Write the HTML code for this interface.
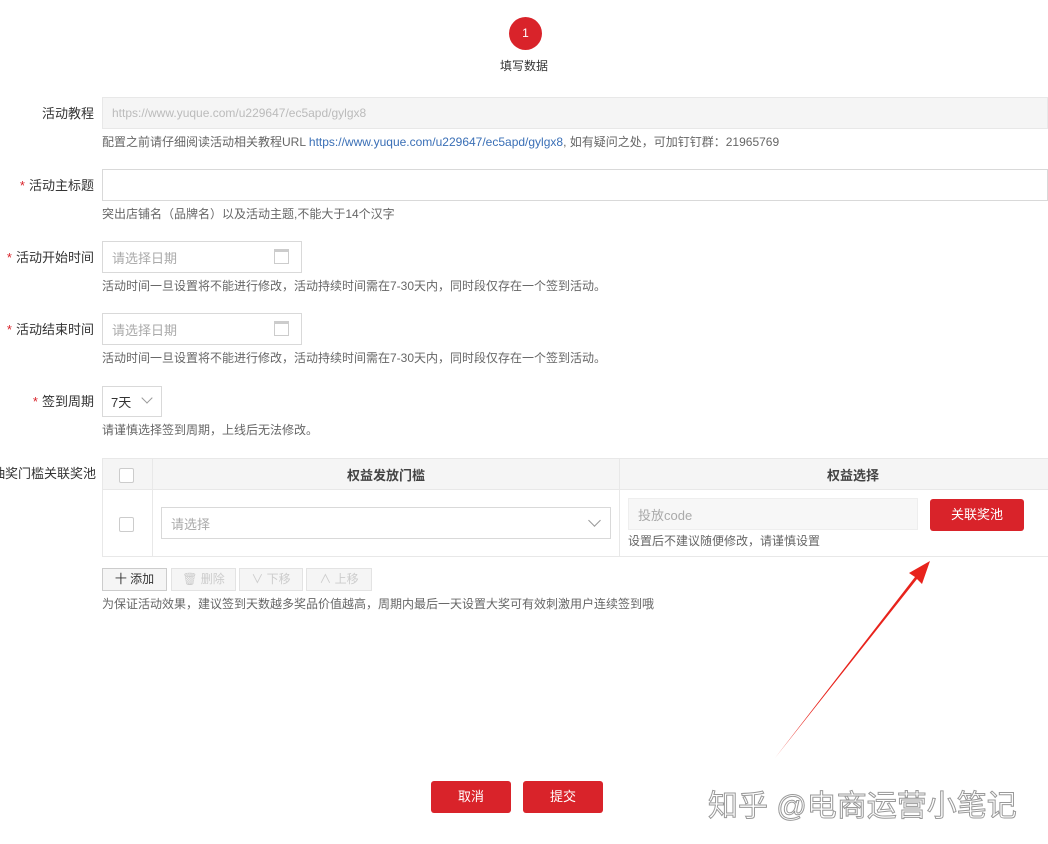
<!DOCTYPE html>
<html><head><meta charset="utf-8"><style>
*{margin:0;padding:0;box-sizing:border-box}
body{width:1048px;height:844px;background:#fff;position:relative;overflow:hidden;font-family:"Liberation Sans","Noto Sans CJK SC",sans-serif;font-size:13px;color:#333}
.a{position:absolute;white-space:nowrap}
.lbl{position:absolute;right:954px;font-size:13px;color:#333;white-space:nowrap}
.lbl i{color:#d9232a;font-style:normal;margin-right:4px}
.in{position:absolute;border:1px solid #d9d9d9;background:#fff}
.help{position:absolute;left:102px;font-size:12px;color:#666;white-space:nowrap}
.ph{color:#aaa;font-size:13px;position:absolute;left:9px;top:6px}
.cb{position:absolute;width:15px;height:15px;border:1px solid #ccc;border-radius:2px;background:#fff}
.sb{position:absolute;top:568px;height:23px;border:1px solid #e3e3e3;background:#f5f5f5;color:#ccc;font-size:12px;text-align:center;line-height:21px}
.rb{position:absolute;background:#d9232a;color:#fff;border-radius:3px;text-align:center;font-size:13px}
</style></head><body>
<div class="a" style="left:509px;top:17px;width:33px;height:33px;border-radius:50%;background:#d9232a;color:#fff;text-align:center;line-height:33px;font-size:12px">1</div>
<div class="a" style="left:500px;top:57px;font-size:12px">填写数据</div>

<div class="lbl" style="top:103px">活动教程</div>
<div class="in" style="left:102px;top:97px;width:946px;height:32px;background:#f5f5f5;border-color:#e8e8e8"><span class="ph" style="color:#bbb;font-size:12px;top:8px">https://www.yuque.com/u229647/ec5apd/gylgx8</span></div>
<div class="help" style="top:133px">配置之前请仔细阅读活动相关教程URL <span style="color:#3a6fb6">https://www.yuque.com/u229647/ec5apd/gylgx8</span>, 如有疑问之处，可加钉钉群：21965769</div>

<div class="lbl" style="top:175px"><i>*</i>活动主标题</div>
<div class="in" style="left:102px;top:169px;width:946px;height:32px"></div>
<div class="help" style="top:205px">突出店铺名（品牌名）以及活动主题,不能大于14个汉字</div>

<div class="lbl" style="top:247px"><i>*</i>活动开始时间</div>
<div class="in" style="left:102px;top:241px;width:200px;height:32px"><span class="ph">请选择日期</span><span class="a" style="left:171px;top:7px;width:15px;height:15px;border:1px solid #ccc;border-top:3px solid #ccc"></span></div>
<div class="help" style="top:277px">活动时间一旦设置将不能进行修改，活动持续时间需在7-30天内，同时段仅存在一个签到活动。</div>

<div class="lbl" style="top:319px"><i>*</i>活动结束时间</div>
<div class="in" style="left:102px;top:313px;width:200px;height:32px"><span class="ph">请选择日期</span><span class="a" style="left:171px;top:7px;width:15px;height:15px;border:1px solid #ccc;border-top:3px solid #ccc"></span></div>
<div class="help" style="top:349px">活动时间一旦设置将不能进行修改，活动持续时间需在7-30天内，同时段仅存在一个签到活动。</div>

<div class="lbl" style="top:391px"><i>*</i>签到周期</div>
<div class="in" style="left:102px;top:386px;width:60px;height:31px"><span class="a" style="left:8px;top:5px;color:#333">7天</span><span class="a" style="left:40px;top:7px;width:8px;height:8px;border-right:1px solid #999;border-bottom:1px solid #999;transform:rotate(45deg)"></span></div>
<div class="help" style="top:421px">请谨慎选择签到周期，上线后无法修改。</div>

<div class="a" style="left:-8px;top:463px;font-size:13px">抽奖门槛关联奖池</div>
<div class="a" style="left:102px;top:458px;width:950px;height:99px;border:1px solid #e8e8e8"></div>
<div class="a" style="left:103px;top:459px;width:945px;height:31px;background:#f5f5f5;border-bottom:1px solid #e8e8e8"></div>
<div class="a" style="left:152px;top:459px;width:1px;height:97px;background:#e8e8e8"></div>
<div class="a" style="left:619px;top:459px;width:1px;height:97px;background:#e8e8e8"></div>
<div class="cb" style="left:119px;top:468px"></div>
<div class="cb" style="left:119px;top:517px"></div>
<div class="a" style="left:347px;top:465px;font-weight:bold;font-size:13px;color:#444">权益发放门槛</div>
<div class="a" style="left:827px;top:465px;font-weight:bold;font-size:13px;color:#444">权益选择</div>
<div class="in" style="left:161px;top:507px;width:450px;height:32px"><span class="ph">请选择</span><span class="a" style="left:428px;top:8px;width:9px;height:9px;border-right:1px solid #999;border-bottom:1px solid #999;transform:rotate(45deg)"></span></div>
<div class="in" style="left:628px;top:498px;width:290px;height:32px;background:#f7f7f7;border-color:#eee"><span class="ph">投放code</span></div>
<div class="a" style="left:628px;top:532px;font-size:12px;color:#666">设置后不建议随便修改，请谨慎设置</div>
<div class="rb" style="left:930px;top:499px;width:94px;height:32px;line-height:32px">关联奖池</div>

<div class="sb" style="left:102px;width:65px;color:#333;border-color:#ccc">十 添加</div>
<div class="sb" style="left:171px;width:65px">🗑 删除</div>
<div class="sb" style="left:239px;width:64px">∨ 下移</div>
<div class="sb" style="left:306px;width:66px">∧ 上移</div>
<div class="help" style="top:595px">为保证活动效果，建议签到天数越多奖品价值越高，周期内最后一天设置大奖可有效刺激用户连续签到哦</div>

<svg class="a" style="left:0;top:0" width="1048" height="844"><polygon points="775,758 915,577 909,573 930,561 922,584 917,579" fill="#e8231c"/></svg>

<div class="rb" style="left:431px;top:781px;width:80px;height:32px;line-height:32px">取消</div>
<div class="rb" style="left:523px;top:781px;width:80px;height:32px;line-height:32px">提交</div>
<div class="a" style="left:708px;top:781px;font-size:30px;color:#fff;-webkit-text-stroke:1px #999;letter-spacing:0px">知乎 @电商运营小笔记</div>
</body></html>
